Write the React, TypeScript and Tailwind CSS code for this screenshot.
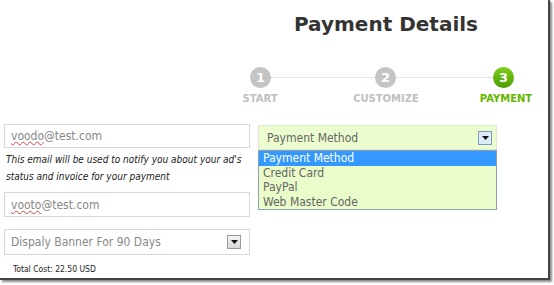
const font = { fontFamily: '"DejaVu Sans", Verdana, sans-serif' }
const form = { fontFamily: '"DejaVu Sans Condensed", "Liberation Sans", sans-serif' }

const Step = ({ n, active }: { n: number; active?: boolean }) => (
  <div
    className={
      "w-[21px] h-[21px] rounded-full flex items-center justify-center text-white text-[13px] font-bold " +
      (active ? "bg-gradient-to-b from-[#7fd01c] to-[#4c9c00]" : "bg-[#c4c4c4]")
    }
  >
    {n}
  </div>
)

const Arrow = ({ blue }: { blue?: boolean }) => (
  <div
    className={
      "w-[14px] h-[14px] flex items-center justify-center border " +
      (blue ? "bg-[#dcecfb] border-[#7d9cbc]" : "bg-gradient-to-b from-[#f4f4f4] to-[#d8d8d8] border-[#9a9a9a]")
    }
  >
    <svg width="7" height="4" viewBox="0 0 7 4">
      <path d="M0 0h7L3.5 4z" fill="#111" />
    </svg>
  </div>
)

export default function App() {
  return (
    <div className="w-[554px] h-[285px] bg-white" style={font}>
      <div className="w-[550px] h-[280px] bg-white border-r-[2px] border-b-[2px] border-[#444] shadow-[2px_2px_2px_#888] overflow-hidden">
        <div className="ml-[240px] w-[292px] pt-[12px] text-center text-[20px] font-bold text-[#333] leading-[24px]">
          Payment Details
        </div>

        <div className="mt-[31px] pl-[250px] flex items-center">
          <Step n={1} />
          <div className="w-[104px] border-t border-dotted border-[#d0d0d0]" />
          <Step n={2} />
          <div className="w-[97px] border-t border-dotted border-[#d0d0d0]" />
          <Step n={3} active />
        </div>
        <div className="mt-[5px] pl-[220px] flex text-[10px] font-bold leading-[12px]">
          <div className="w-[80px] text-center text-[#c0c0c0]">START</div>
          <div className="ml-[46px] w-[80px] text-center text-[#c0c0c0]">CUSTOMIZE</div>
          <div className="ml-[40px] w-[80px] text-center text-[#66b600]">PAYMENT</div>
        </div>

        <div className="mt-[19px] flex gap-[8px] pl-[4px]" style={form}>
          <div className="w-[246px] flex flex-col">
            <div className="h-[24px] border border-[#d8d8d8] flex items-center px-[6px] text-[12px] text-[#888]">
              <span className="underline decoration-wavy decoration-[#e04040] decoration-[1px]">voodo</span>@test.com
            </div>
            <div className="mt-[3px] pl-[2px] text-[10px] italic leading-[17px] text-[#222]">
              This email will be used to notify you about your ad's status and invoice for your payment
            </div>
            <div className="mt-[7px] h-[25px] border border-[#d8d8d8] flex items-center px-[6px] text-[12px] text-[#888]">
              <span className="underline decoration-wavy decoration-[#e04040] decoration-[1px]">vooto</span>@test.com
            </div>
            <div className="mt-[12px] h-[26px] border border-[#d8d8d8] flex items-center justify-between pl-[6px] pr-[8px] text-[12px] text-[#888]">
              <span>Dispaly Banner For 90 Days</span>
              <Arrow />
            </div>
            <div className="mt-[9px] pl-[9px] text-[8.5px] text-[#222] leading-[10px]">Total Cost: 22.50 USD</div>
          </div>

          <div className="mt-[1px] w-[239px] flex flex-col text-[12px]">
            <div className="h-[25px] bg-[#ebfccf] border border-[#dde8cc] flex items-center justify-between pl-[8px] pr-[4px] text-[#666]">
              <span>Payment Method</span>
              <Arrow blue />
            </div>
            <div className="bg-[#eafcc9] border border-[#8ea0b0] leading-[14.5px] text-[#666]">
              <div className="bg-[#3399ff] text-white pl-[4px]">Payment Method</div>
              <div className="pl-[4px]">Credit Card</div>
              <div className="pl-[4px]">PayPal</div>
              <div className="pl-[4px]">Web Master Code</div>
            </div>
          </div>
        </div>
      </div>
    </div>
  )
}
